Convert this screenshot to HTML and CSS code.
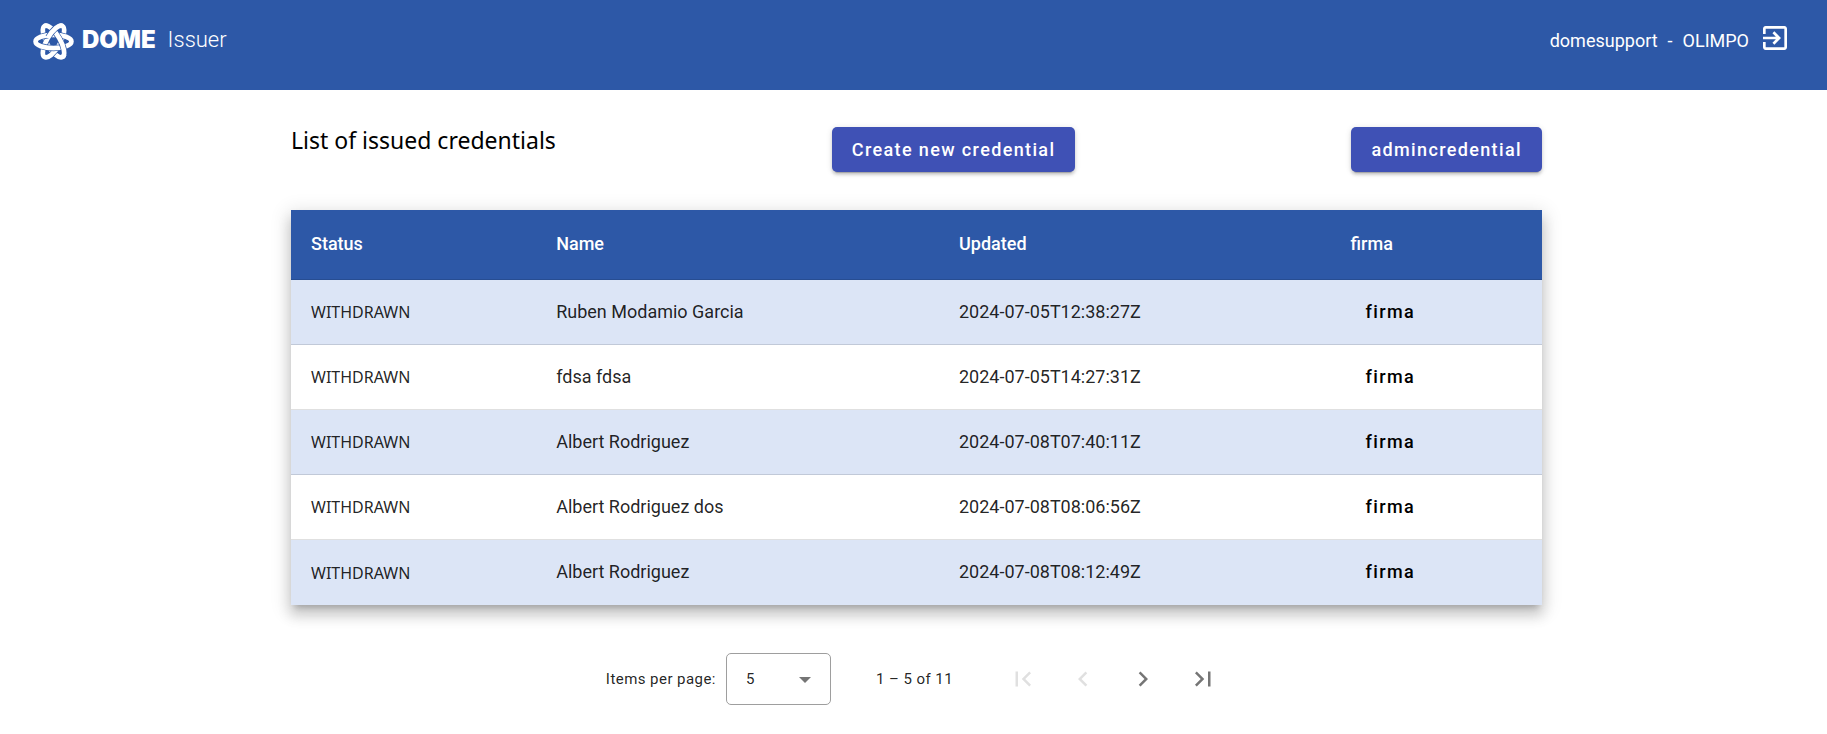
FILE: index.html
```html
<!DOCTYPE html>
<html lang="en">
<head>
<meta charset="utf-8">
<title>DOME Issuer</title>
<link rel="stylesheet" href="styles.css">
</head>
<body>
<header class="navbar">
  <a class="brand" href="#">
    <svg class="brand-mark" viewBox="0 0 42 40" aria-hidden="true">
      <g transform="rotate(60 21 20)">
        <ellipse class="ribbon-edge" cx="21" cy="20" rx="17.5" ry="6.5"/>
        <ellipse class="ribbon-face" cx="21" cy="20" rx="17.5" ry="6.5"/>
      </g>
      <g transform="rotate(120 21 20)">
        <ellipse class="ribbon-edge" cx="21" cy="20" rx="17.5" ry="6.5"/>
        <ellipse class="ribbon-face" cx="21" cy="20" rx="17.5" ry="6.5"/>
      </g>
      <ellipse class="ribbon-edge" cx="21" cy="20" rx="17.5" ry="6.5"/>
      <ellipse class="ribbon-face" cx="21" cy="20" rx="17.5" ry="6.5"/>
      <g transform="rotate(60 21 20)">
        <path class="ribbon-edge" d="M5 17.5A17.5 6.5 0 0 1 37 17.5"/>
        <path class="ribbon-face" d="M3.5 20A17.5 6.5 0 0 1 38.5 20"/>
      </g>
      <g transform="rotate(120 21 20)">
        <path class="ribbon-edge" d="M5 22.5A17.5 6.5 0 0 0 20 26.5"/>
        <path class="ribbon-face" d="M3.5 20A17.5 6.5 0 0 0 21 26.5"/>
      </g>
    </svg>
    <span class="brand-name">DOME</span>
    <span class="brand-app">Issuer</span>
  </a>
  <div class="session">
    <span>domesupport</span><span>-</span><span>OLIMPO</span>
    <button class="logout" type="button" aria-label="Log out">
      <svg viewBox="0 0 24 24" aria-hidden="true"><path d="M10.09 15.59L11.5 17l5-5-5-5-1.41 1.41L12.67 11H3v2h9.67l-2.58 2.59zM19 3H5c-1.11 0-2 .9-2 2v4h2V5h14v14H5v-4H3v4c0 1.1.89 2 2 2h14c1.1 0 2-.9 2-2V5c0-1.1-.9-2-2-2z"/></svg>
    </button>
  </div>
</header>
<main class="content">
  <div class="toolbar">
    <h1 class="title">List of issued credentials</h1>
    <button class="raised" type="button">Create new credential</button>
    <button class="raised" type="button">admincredential</button>
  </div>
  <table class="credentials">
    <colgroup><col class="col-status"><col class="col-name"><col class="col-updated"><col class="col-sign"></colgroup>
    <thead>
      <tr><th scope="col">Status</th><th scope="col">Name</th><th scope="col">Updated</th><th scope="col">firma</th></tr>
    </thead>
    <tbody>
      <tr><td class="status">WITHDRAWN</td><td>Ruben Modamio Garcia</td><td>2024-07-05T12:38:27Z</td><td><button class="flat" type="button">firma</button></td></tr>
      <tr><td class="status">WITHDRAWN</td><td>fdsa fdsa</td><td>2024-07-05T14:27:31Z</td><td><button class="flat" type="button">firma</button></td></tr>
      <tr><td class="status">WITHDRAWN</td><td>Albert Rodriguez</td><td>2024-07-08T07:40:11Z</td><td><button class="flat" type="button">firma</button></td></tr>
      <tr><td class="status">WITHDRAWN</td><td>Albert Rodriguez dos</td><td>2024-07-08T08:06:56Z</td><td><button class="flat" type="button">firma</button></td></tr>
      <tr><td class="status">WITHDRAWN</td><td>Albert Rodriguez</td><td>2024-07-08T08:12:49Z</td><td><button class="flat" type="button">firma</button></td></tr>
    </tbody>
  </table>
  <nav class="paginator" aria-label="Pagination">
    <label for="page-size">Items per page:</label>
    <div class="select-box">
      <select id="page-size"><option>5</option><option>10</option><option>25</option></select>
      <svg class="arrow" viewBox="0 0 12 6" aria-hidden="true"><path d="M0 0h12L6 6z"/></svg>
    </div>
    <span class="range">1 – 5 of 11</span>
    <div class="pages">
      <button type="button" disabled aria-label="First page"><svg viewBox="0 0 24 24"><path d="M18.41 16.59L13.82 12l4.59-4.59L17 6l-6 6 6 6zM6 6h2v12H6z"/></svg></button>
      <button type="button" disabled aria-label="Previous page"><svg viewBox="0 0 24 24"><path d="M15.41 7.41L14 6l-6 6 6 6 1.41-1.41L10.83 12z"/></svg></button>
      <button type="button" aria-label="Next page"><svg viewBox="0 0 24 24"><path d="M10 6L8.59 7.41 13.17 12l-4.58 4.59L10 18l6-6z"/></svg></button>
      <button type="button" aria-label="Last page"><svg viewBox="0 0 24 24"><path d="M5.59 7.41L10.18 12l-4.59 4.59L7 18l6-6-6-6zM16 6h2v12h-2z"/></svg></button>
    </div>
  </nav>
</main>
</body>
</html>
```
FILE: styles.css
```css
* { box-sizing: border-box; }
body {
  margin: 0;
  background: #fff;
  color: rgba(0, 0, 0, 0.87);
  font-family: Roboto, "Liberation Sans", sans-serif;
  font-size: 18px;
}
button, select { font-family: inherit; color: inherit; }
button { border: 0; background: none; cursor: pointer; }

.navbar {
  display: flex;
  justify-content: space-between;
  height: 90px;
  padding: 20px 36px 28px 32px;
  background: #2d58a7;
  color: #fff;
}
.brand { display: flex; align-items: center; color: #fff; text-decoration: none; }
.brand-mark { width: 43px; height: 41px; margin-right: 7px; }
.ribbon-edge { fill: none; stroke: #2d58a7; stroke-width: 6; }
.ribbon-face { fill: none; stroke: #fff; stroke-width: 4.6; }
.brand-name { margin-right: 12px; font-family: Inter, sans-serif; font-size: 24px; font-weight: 900; line-height: 38px; padding-bottom: 2px; }
.brand-app { font-size: 22px; font-weight: 300; line-height: 38px; padding-bottom: 2px; }

.session { display: flex; align-items: center; gap: 10px; padding-bottom: 2px; }
.logout { display: flex; padding: 0; color: #fff; }
.logout svg { width: 32px; height: 32px; margin-bottom: 4px; fill: currentColor; }

.content { padding: 37px 285px 0 291px; }
.toolbar { display: flex; justify-content: space-between; align-items: flex-start; }
.title {
  margin: 0;
  color: #000;
  font-family: "Noto Sans", sans-serif;
  font-size: 23px;
  font-weight: 400;
  line-height: 26px;
}
.raised {
  height: 45px;
  padding: 0 20px;
  border-radius: 5px;
  background: #3f51b5;
  color: #fff;
  font-size: 18px;
  font-weight: 500;
  letter-spacing: 0.076em;
  box-shadow: 0 4px 1px -3px rgba(0, 0, 0, 0.2), 0 3px 3px rgba(0, 0, 0, 0.14), 0 1px 6px rgba(0, 0, 0, 0.12);
}

.credentials {
  width: 100%;
  margin-top: 38px;
  border-collapse: separate;
  border-spacing: 0;
  table-layout: fixed;
  box-shadow: 0 6px 6px -4px rgba(0, 0, 0, 0.2), 0 10px 12px 1px rgba(0, 0, 0, 0.14), 0 4px 18px 3px rgba(0, 0, 0, 0.12);
}
.col-status { width: 19.6%; }
.col-name { width: 32.2%; }
.col-updated { width: 31.3%; }
.col-sign { width: 16.9%; }
.credentials th, .credentials td {
  padding: 0 20px 2px;
  border-bottom: 1px solid rgba(0, 0, 0, 0.12);
  text-align: left;
}
.credentials th { height: 70px; background: #2d58a7; color: #fff; font-weight: 500; }
.credentials td { height: 65px; background: #fff; }
.credentials tbody tr:nth-child(odd) td { background: #dce5f6; }
.credentials tbody tr:last-child td { border-bottom: 0; }
.credentials .status { padding-bottom: 0; font-family: "Noto Sans", sans-serif; font-size: 16px; }
.flat {
  height: 45px;
  padding: 0 15px;
  color: #000;
  font-size: 18px;
  font-weight: 500;
  letter-spacing: 0.076em;
}

.paginator {
  display: flex;
  justify-content: center;
  align-items: center;
  margin-top: 44px;
  padding-left: 6px;
  font-size: 15px;
  letter-spacing: 0.03em;
}
.select-box { position: relative; width: 105px; margin-left: 10px; }
.select-box select {
  width: 100%;
  height: 52px;
  padding: 0 19px;
  appearance: none;
  border: 1px solid #9e9e9e;
  border-radius: 5px;
  background: #fff;
  font-size: 15px;
}
.arrow { position: absolute; top: 24px; right: 20px; width: 12px; height: 6px; fill: #757575; pointer-events: none; }
.range { margin: 0 40px 0 45px; }
.pages { display: flex; }
.pages button { display: flex; justify-content: center; align-items: center; width: 60px; height: 60px; padding: 0; color: #757575; }
.pages button:disabled { color: #e0e0e0; }
.pages svg { width: 30px; height: 30px; fill: currentColor; }
```
